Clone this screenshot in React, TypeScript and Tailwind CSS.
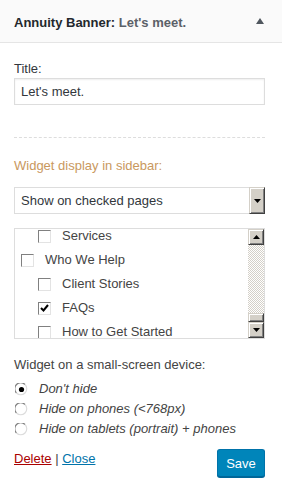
import React from 'react';

const font = "font-['Liberation_Sans',Arial,sans-serif]";

function Arrow({ up }: { up?: boolean }) {
  return (
    <svg width="7" height="4" viewBox="0 0 7 4" className="block">
      {up ? <path d="M3.5 0 L7 4 L0 4 Z" fill="#000" /> : <path d="M0 0 L7 0 L3.5 4 Z" fill="#000" />}
    </svg>
  );
}

function ClassicButton({ up, className = '' }: { up?: boolean; className?: string }) {
  return (
    <div
      className={`flex items-center justify-center bg-[#d4d0c8] border border-t-[#d4d0c8] border-l-[#d4d0c8] border-r-[#404040] border-b-[#404040] shadow-[inset_1px_1px_#fff,inset_-1px_-1px_#808080] ${className}`}
    >
      <Arrow up={up} />
    </div>
  );
}

function Checkbox({ checked }: { checked?: boolean }) {
  return (
    <span className="w-[13px] h-[13px] shrink-0 bg-white border border-t-[#808080] border-l-[#808080] border-r-[#e3e3e3] border-b-[#e3e3e3] flex items-center justify-center">
      {checked && (
        <svg width="9" height="8" viewBox="0 0 9 8">
          <path d="M1 4 L3.5 6.5 L8 1" stroke="#000" strokeWidth="2" fill="none" />
        </svg>
      )}
    </span>
  );
}

function Radio({ checked }: { checked?: boolean }) {
  return (
    <svg width="13" height="13" viewBox="0 0 13 13" className="shrink-0">
      <circle cx="6.5" cy="6.5" r="6" fill="#fff" />
      <path d="M1.5 10 A6 6 0 0 1 10 1.5" stroke="#808080" strokeWidth="1.2" fill="none" />
      <path d="M10 1.5 A6 6 0 0 1 1.5 10" stroke="#dcdcdc" strokeWidth="1.2" fill="none" />
      {checked && <circle cx="6.5" cy="6.5" r="2.6" fill="#000" />}
    </svg>
  );
}

const pages = [
  { label: 'Services', level: 1, checked: false },
  { label: 'Who We Help', level: 0, checked: false },
  { label: 'Client Stories', level: 1, checked: false },
  { label: 'FAQs', level: 1, checked: true },
  { label: 'How to Get Started', level: 1, checked: false },
];

const options = ["Don't hide", 'Hide on phones (<768px)', 'Hide on tablets (portrait) + phones'];

export default function App() {
  return (
    <div className={`w-[282px] h-[491px] bg-white text-[13px] text-[#444] overflow-hidden ${font}`}>
      {/* Header */}
      <div className="h-[43px] bg-[#fafafa] border-b border-[#e5e5e5] flex items-center justify-between pl-[14px] pr-[18px]">
        <div className="font-bold text-[#23282d] leading-none pt-[2px]">
          Annuity Banner: <span className="text-[#5b6168]">Let's meet.</span>
        </div>
        <svg width="8" height="6" viewBox="0 0 8 6">
          <path d="M4 0 L8 6 L0 6 Z" fill="#50575e" />
        </svg>
      </div>

      <div className="pl-[14px] pr-[17px]">
        {/* Title */}
        <div className="mt-[16px] h-[19px] leading-[19px] text-[#32373c]">Title:</div>
        <div className="h-[27px] border border-[#ddd] shadow-[inset_0_1px_2px_rgba(0,0,0,0.07)] flex items-center px-[6px] text-[#32373c]">
          Let's meet.
        </div>

        <div className="mt-[32px] border-t border-dashed border-[#ddd]" />

        {/* Sidebar display */}
        <div className="mt-[18px] h-[19px] leading-[19px] text-[#c9985e]">Widget display in sidebar:</div>
        <div className="mt-[12px] h-[27px] border border-[#ddd] flex items-stretch text-[#32373c]">
          <div className="flex-1 flex items-center pl-[6px]">Show on checked pages</div>
          <ClassicButton className="w-[16px] -my-px -mr-px" />
        </div>

        {/* Pages list */}
        <div className="mt-[14px] h-[111px] border border-[#ddd] flex">
          <div className="flex-1 overflow-hidden">
            <div className="-mt-[5px]">
              {pages.map(p => (
                <div key={p.label} className={`h-[24px] flex items-center gap-[11px] ${p.level ? 'pl-[23px]' : 'pl-[6px]'}`}>
                  <Checkbox checked={p.checked} />
                  <span className="text-[#444]">{p.label}</span>
                </div>
              ))}
            </div>
          </div>
          <div className="w-[16px] flex flex-col">
            <ClassicButton up className="h-[16px]" />
            <div className="flex-1 flex flex-col justify-end bg-[repeating-conic-gradient(#d4d0c8_0%_25%,#fff_0%_50%)] bg-[length:2px_2px]">
              <div className="h-[9px] bg-[#d4d0c8] border border-t-[#d4d0c8] border-l-[#d4d0c8] border-r-[#404040] border-b-[#404040] shadow-[inset_1px_1px_#fff,inset_-1px_-1px_#808080]" />
            </div>
            <ClassicButton className="h-[16px]" />
          </div>
        </div>

        {/* Small screen */}
        <div className="mt-[16px] h-[19px] leading-[19px]">Widget on a small-screen device:</div>
        <div className="mt-[5px] flex flex-col">
          {options.map((o, i) => (
            <div key={o} className="h-[20px] flex items-center gap-[11px] pl-[1px]">
              <Radio checked={i === 0} />
              <span className="italic">{o}</span>
            </div>
          ))}
        </div>

        {/* Footer */}
        <div className="mt-[10px] flex items-center justify-between">
          <div className="pb-[9px]">
            <a className="text-[#a00] underline">Delete</a>
            <span className="text-[#444]"> | </span>
            <a className="text-[#0073aa] underline">Close</a>
          </div>
          <button className="h-[28px] w-[48px] rounded-[3px] bg-[#0085ba] border border-[#0073aa] border-b-[#006799] shadow-[0_1px_0_#006799] text-white text-[13px]">
            Save
          </button>
        </div>
      </div>
    </div>
  );
}
